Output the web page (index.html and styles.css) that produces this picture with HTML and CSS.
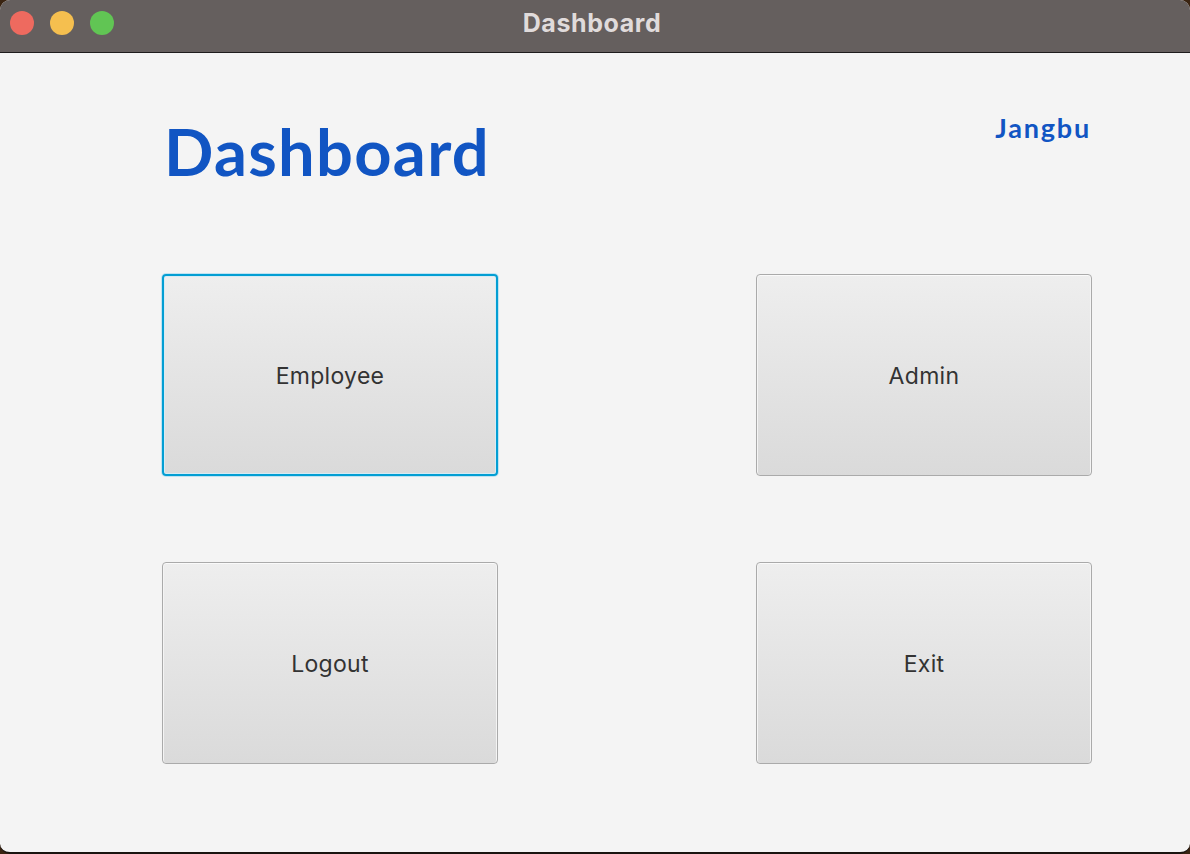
FILE: index.html
```html
<!DOCTYPE html>
<html>
<head>
<meta charset="utf-8">
<link rel="stylesheet" href="styles.css">
</head>
<body>
<div class="window">
  <div class="titlebar">
    <div class="lights">
      <span class="light red"></span>
      <span class="light yellow"></span>
      <span class="light green"></span>
    </div>
    <div class="title">Dashboard</div>
  </div>
  <div class="content">
    <div class="header">
      <h1 class="heading">Dashboard</h1>
      <div class="user">Jangbu</div>
    </div>
    <div class="grid">
      <button class="btn focused">Employee</button>
      <button class="btn">Admin</button>
      <button class="btn">Logout</button>
      <button class="btn">Exit</button>
    </div>
  </div>
</div>
</body>
</html>
```

FILE: styles.css
```css
html, body {
  margin: 0;
  padding: 0;
  width: 1190px;
  height: 854px;
  overflow: hidden;
  background: #3a2412;
}
.window {
  width: 1190px;
  height: 852px;
  border-radius: 10px;
  overflow: hidden;
  background: #f4f4f4;
  display: flex;
  flex-direction: column;
  border-bottom: 2px solid #1a1410;
}
.titlebar {
  height: 52px;
  flex: none;
  background: #655f5e;
  border-bottom: 1px solid #1e1c1c;
  position: relative;
  display: flex;
  align-items: center;
  justify-content: center;
}
.lights {
  position: absolute;
  left: 10px;
  top: 11px;
  display: flex;
  gap: 16px;
}
.light {
  width: 24px;
  height: 24px;
  border-radius: 50%;
  display: block;
}
.red { background: #ee6a5f; }
.yellow { background: #f5bf4f; }
.green { background: #61c554; }
.title {
  font-family: Inter, "Liberation Sans", sans-serif;
  font-weight: 700;
  font-size: 25px;
  color: #e0dbdb;
  margin-top: -6px;
  margin-left: -6px;
  letter-spacing: 0.6px;
}
.content {
  flex: 1;
  padding: 0 100px 0 162px;
  display: flex;
  flex-direction: column;
}
.header {
  display: flex;
  justify-content: space-between;
  align-items: flex-start;
  height: 221px;
}
.heading {
  margin: 60px 0 0 2px;
  font-family: Lato, "Liberation Sans", sans-serif;
  font-weight: 700;
  font-size: 65px;
  line-height: 76px;
  letter-spacing: 1.3px;
  color: #1155c3;
}
.user {
  margin-top: 59px;
  font-family: Lato, "Liberation Sans", sans-serif;
  font-weight: 700;
  font-size: 27px;
  line-height: 32px;
  letter-spacing: 1.8px;
  margin-right: -1px;
  color: #1155c3;
}
.grid {
  display: grid;
  grid-template-columns: 336px 336px;
  grid-template-rows: 202px 202px;
  column-gap: 258px;
  row-gap: 86px;
}
.btn {
  font-family: Inter, "Liberation Sans", sans-serif;
  font-size: 23px;
  letter-spacing: 0.3px;
  color: #333333;
  border: 1px solid #aaaaaa;
  border-radius: 4px;
  background: linear-gradient(#eeeeee, #dadada);
  box-shadow: inset 0 1px 0 #fafafa, inset 1px 0 0 #f4f4f4, inset -1px 0 0 #f4f4f4;
  padding: 2px 0 0 0;
  margin: 0;
  display: flex;
  align-items: center;
  justify-content: center;
}
.btn.focused {
  border: 2px solid #039ed3;
  box-shadow: 0 0 0 1px #bfe3f2, inset 0 0 0 1px #d6ebf4;
}
```
